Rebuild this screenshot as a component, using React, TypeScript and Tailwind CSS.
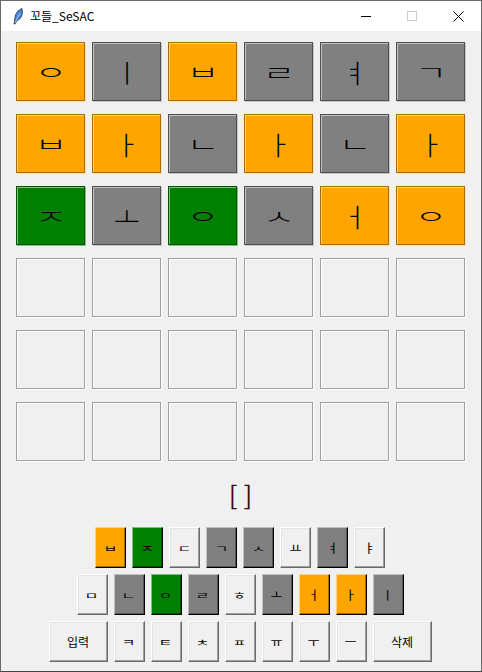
const font = { fontFamily: '"Noto Sans CJK KR", "Noto Sans", sans-serif' };

type Kind = "o" | "g" | "y" | "e";

const tileClass: Record<Kind, string> = {
  o: "bg-[#ffa500] border-[#a86d00] shadow-[inset_1px_1px_0_#ffd27f,1px_1px_0_#ffe2ac]",
  g: "bg-[#808080] border-[#505050] shadow-[inset_1px_1px_0_#bfbfbf,1px_1px_0_#c4c4c4]",
  y: "bg-[#008000] border-[#005400] shadow-[inset_1px_1px_0_#7fbf7f,1px_1px_0_#7fbf7f]",
  e: "bg-[#f0f0f0] border-[#a0a0a0] shadow-[inset_1px_1px_0_#ffffff,1px_1px_0_#ffffff]",
};

const keyClass: Record<Kind, string> = {
  o: "bg-[#ffa500] border-t-[#ffd27f] border-l-[#ffd27f] border-r-black border-b-black shadow-[inset_-1px_-1px_0_#a86d00]",
  g: "bg-[#808080] border-t-[#bfbfbf] border-l-[#bfbfbf] border-r-black border-b-black shadow-[inset_-1px_-1px_0_#555555]",
  y: "bg-[#008000] border-t-[#7fbf7f] border-l-[#7fbf7f] border-r-black border-b-black shadow-[inset_-1px_-1px_0_#005400]",
  e: "bg-[#f0f0f0] border-t-white border-l-white border-r-[#696969] border-b-[#696969] shadow-[inset_-1px_-1px_0_#a0a0a0,inset_1px_1px_0_#e3e3e3]",
};

const vowels = "ㅣㅏㅑㅓㅕㅗㅛㅜㅠㅡ";

const board: [string, Kind][][] = [
  [["ㅇ", "o"], ["ㅣ", "g"], ["ㅂ", "o"], ["ㄹ", "g"], ["ㅕ", "g"], ["ㄱ", "g"]],
  [["ㅂ", "o"], ["ㅏ", "o"], ["ㄴ", "g"], ["ㅏ", "o"], ["ㄴ", "g"], ["ㅏ", "o"]],
  [["ㅈ", "y"], ["ㅗ", "g"], ["ㅇ", "y"], ["ㅅ", "g"], ["ㅓ", "o"], ["ㅇ", "o"]],
  Array.from({ length: 6 }, () => ["", "e"] as [string, Kind]),
  Array.from({ length: 6 }, () => ["", "e"] as [string, Kind]),
  Array.from({ length: 6 }, () => ["", "e"] as [string, Kind]),
];

const row1: [string, Kind][] = [["ㅂ", "o"], ["ㅈ", "y"], ["ㄷ", "e"], ["ㄱ", "g"], ["ㅅ", "g"], ["ㅛ", "e"], ["ㅕ", "g"], ["ㅑ", "e"]];
const row2: [string, Kind][] = [["ㅁ", "e"], ["ㄴ", "g"], ["ㅇ", "y"], ["ㄹ", "g"], ["ㅎ", "e"], ["ㅗ", "g"], ["ㅓ", "o"], ["ㅏ", "o"], ["ㅣ", "g"]];
const row3: [string, Kind][] = [["ㅋ", "e"], ["ㅌ", "e"], ["ㅊ", "e"], ["ㅍ", "e"], ["ㅠ", "e"], ["ㅜ", "e"], ["ㅡ", "e"]];

function Key({ label, kind, wide }: { label: string; kind: Kind; wide?: boolean }) {
  return (
    <div
      className={`${wide ? "w-[59px] text-[12px]" : "w-[31px] text-[12px]"} h-[41px] border box-border flex items-center justify-center text-black ${keyClass[kind]}`}
    >
      <span className={wide ? "" : vowels.includes(label) ? "inline-block leading-none scale-x-110" : "inline-block leading-none scale-x-125 scale-y-75"}>{label}</span>
    </div>
  );
}

export default function App() {
  return (
    <div
      className="w-[482px] h-[672px] box-border border border-[#6a6a6a] border-b-[#444444] bg-[#f0f0f0] flex flex-col overflow-hidden"
      style={font}
    >
      <div className="h-[30px] shrink-0 bg-white flex items-center relative">
        <svg width="10" height="17" viewBox="0 0 10 17" className="ml-[12px]">
          <path d="M1 16 L2 10 C2 6 5 2 9 0.5 C10 5 9 11 4 12.5 L2 16 Z" fill="#4a86d8" stroke="#20304a" strokeWidth="0.8" />
          <path d="M2 15 L7 5" stroke="#bcd4f2" strokeWidth="0.8" fill="none" />
        </svg>
        <span className="ml-[7px] text-[12px] leading-none text-black">꼬들_SeSAC</span>
        <div className="ml-auto flex items-center">
          <div className="w-[46px] h-[30px] flex items-center justify-center">
            <div className="w-[10px] h-px bg-black" />
          </div>
          <div className="w-[46px] h-[30px] flex items-center justify-center">
            <div className="w-[10px] h-[10px] border border-[#cccccc]" />
          </div>
          <div className="w-[46px] h-[30px] flex items-center justify-center">
            <svg width="11" height="11" viewBox="0 0 11 11">
              <path d="M0.5 0.5 L10.5 10.5 M10.5 0.5 L0.5 10.5" stroke="#000" strokeWidth="1" />
            </svg>
          </div>
        </div>
      </div>

      <div className="flex-1 flex flex-col pt-[11px] pl-[15px]">
        <div className="grid grid-cols-[repeat(6,69px)] auto-rows-[59px] gap-x-[7px] gap-y-[13px]">
          {board.flat().map(([ch, kind], i) => (
            <div
              key={i}
              className={`border box-border flex items-center justify-center text-[26px] text-black font-light ${tileClass[kind]}`}
            >
              <span className={vowels.includes(ch) ? "inline-block leading-none scale-x-110" : "inline-block leading-none scale-x-[1.35] scale-y-75"}>{ch}</span>
            </div>
          ))}
        </div>
      </div>

      <div className="text-center text-[26px] leading-[26px] mb-[20px] text-[#3a0a0a] pr-[1px]">[ ]</div>

      <div className="flex flex-col items-center gap-[6px] pb-[9px] pr-[2px]">
        <div className="flex gap-[6px]">
          {row1.map(([c, k]) => <Key key={c} label={c} kind={k} />)}
        </div>
        <div className="flex gap-[6px]">
          {row2.map(([c, k]) => <Key key={c} label={c} kind={k} />)}
        </div>
        <div className="flex gap-[6px]">
          <Key label="입력" kind="e" wide />
          {row3.map(([c, k]) => <Key key={c} label={c} kind={k} />)}
          <Key label="삭제" kind="e" wide />
        </div>
      </div>
    </div>
  );
}
